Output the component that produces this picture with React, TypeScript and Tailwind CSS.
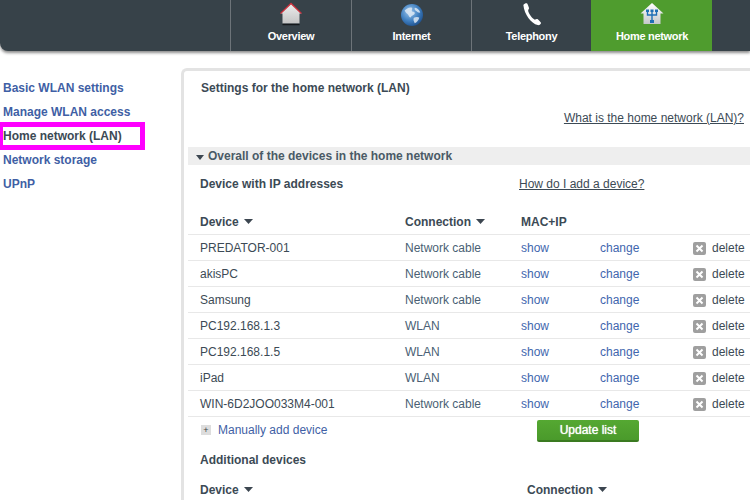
import React from 'react';

const Caret = () => (
  <svg width="9" height="5" viewBox="0 0 9 5" className="ml-[5px] inline-block align-[2px]">
    <path d="M0 0h9L4.5 5z" fill="#3c4650" />
  </svg>
);

const OverviewIcon = () => (
  <svg width="24" height="24" viewBox="0 0 24 24">
    <defs>
      <linearGradient id="ov" x1="0" y1="0" x2="0" y2="1">
        <stop offset="0" stopColor="#eeeeee" />
        <stop offset="1" stopColor="#c4c4c4" />
      </linearGradient>
    </defs>
    <path d="M12 1.500 L22.500 11.500 L20.500 11.500 L20.500 21.500 L3.500 21.500 L3.500 11.500 L1.500 11.500 Z" fill="url(#ov)" />
    <path d="M1.500 11.500 L12 1.500 L22.500 11.500" fill="none" stroke="#c9303c" strokeWidth="1.300" />
    <path d="M3.500 22.500h17" stroke="#15191c" strokeWidth="1.500" />
  </svg>
);

const GlobeIcon = () => (
  <svg width="22" height="22" viewBox="0 0 24 24">
    <defs>
      <radialGradient id="gl" cx="0.4" cy="0.35" r="0.7">
        <stop offset="0" stopColor="#9cc6ec" />
        <stop offset="0.6" stopColor="#3f7fc0" />
        <stop offset="1" stopColor="#1d4f8c" />
      </radialGradient>
    </defs>
    <circle cx="12" cy="12" r="12" fill="url(#gl)" />
    <path d="M4 7c2-2 5-4 8-3 1 1-1 3 0 4s3 0 3 2-3 2-4 4-2 0-3-2-3-2-4-5z" fill="#dfeaf4" opacity="0.85" />
    <path d="M15 4c2 0 5 2 6 5-1 1-3 0-4-1s-3-2-2-4zM14 15c2-1 5-1 6 0-1 3-3 5-5 6-1-2-2-4-1-6z" fill="#e6eff7" opacity="0.8" />
  </svg>
);

const PhoneIcon = () => (
  <svg width="20" height="24" viewBox="0 0 20 25">
    <path d="M1 3 C2 1.500 4 1 5 1.500 C6 3 6.500 5 7 6.500 C6.500 7.500 6 8 6 9.500 C7 13 10 17 13 18.500 C14 18 15 17.500 16 18 C17.500 19.500 19 21 19.500 22 C19 23.500 17.500 24.500 16 24 C9 22 2 13 1 3 Z" fill="#fff" />
  </svg>
);

const NetworkIcon = () => (
  <svg width="24" height="24" viewBox="0 0 24 24">
    <defs>
      <linearGradient id="hn" x1="0" y1="0" x2="0" y2="1">
        <stop offset="0" stopColor="#ffffff" />
        <stop offset="1" stopColor="#c4c8ca" />
      </linearGradient>
    </defs>
    <path d="M12 1 L23.500 11.500 L20.500 11.500 L20.500 22 L3.500 22 L3.500 11.500 L0.500 11.500 Z" fill="url(#hn)" />
    <path d="M12 9v10M7.500 9.500v3.500h9V9.500" fill="none" stroke="#1f6fb5" strokeWidth="1.400" />
    <path d="M6 7.500h3v2.500H6zM10.500 7.500h3v2.500h-3zM15 7.500h3v2.500h-3zM10 18h4v3h-4z" fill="#1f6fb5" />
  </svg>
);

const tabs = [
  { label: 'Overview', icon: <OverviewIcon />, width: 'w-[121px]' },
  { label: 'Internet', icon: <GlobeIcon />, width: 'w-[120px]' },
  { label: 'Telephony', icon: <PhoneIcon />, width: 'w-[120px]' },
  { label: 'Home network', icon: <NetworkIcon />, width: 'w-[121px]', active: true },
];

const sideLinks = ['Basic WLAN settings', 'Manage WLAN access', 'Home network (LAN)', 'Network storage', 'UPnP'];

const devices = [
  ['PREDATOR-001', 'Network cable'],
  ['akisPC', 'Network cable'],
  ['Samsung', 'Network cable'],
  ['PC192.168.1.3', 'WLAN'],
  ['PC192.168.1.5', 'WLAN'],
  ['iPad', 'WLAN'],
  ['WIN-6D2JOO033M4-001', 'Network cable'],
];

export default function App() {
  return (
    <div className="w-[750px] h-[500px] overflow-hidden bg-white text-[12px] text-[#3c4a55] font-['Liberation_Sans',Arial,sans-serif]">
      <header className="h-[51px] bg-[#374249] rounded-bl-[8px] shadow-[0_2px_3px_rgba(0,0,0,0.45)] pl-[230px] flex">
        {tabs.map((t) => (
          <div
            key={t.label}
            className={`${t.width} h-full flex flex-col items-center border-l ${t.active ? 'bg-[#4f9c2e] border-[#4f9c2e]' : 'border-[#6d7479]'}`}
          >
            <div className="h-[26px] flex items-end justify-center">{t.icon}</div>
            <span className="mt-[2px] text-[11px] font-bold tracking-[-0.3px] text-white">{t.label}</span>
          </div>
        ))}
      </header>

      <div className="flex pt-[17px]">
        <nav className="w-[181px] shrink-0 pt-[8px]">
          {sideLinks.map((l) =>
            l === 'Home network (LAN)' ? (
              <div key={l} className="h-[24px] flex items-center">
                <div className="w-[145px] h-[28px] shrink-0 border-y-[5px] border-r-[5px] border-l-[3px] border-[#ff00ff] flex items-center font-bold text-[#3c4a55]">
                  {l}
                </div>
              </div>
            ) : (
              <div key={l} className="h-[24px] flex items-center pl-[3px] font-bold text-[#3f5fa5]">
                {l}
              </div>
            )
          )}
        </nav>

        <main className="flex-1 border-l-[3px] border-t-[3px] border-[#e3e3e3] rounded-tl-[6px] pl-[4px] h-[440px]">
          <div className="pl-[13px] pt-[10px] h-[26px] font-bold leading-[14px]">Settings for the home network (LAN)</div>
          <div className="mt-[13px] h-[16px] text-right pr-[6px] leading-[16px]">
            <a className="underline">What is the home network (LAN)?</a>
          </div>
          <div className="mt-[21px] h-[18px] bg-[#eeeeee] bg-[radial-gradient(#dcdcdc_0.6px,transparent_0.6px)] bg-[length:4px_4px] flex items-center pl-[8px]">
            <svg width="8" height="5" viewBox="0 0 8 5" className="mt-[2px]">
              <path d="M0 0h8L4 5z" fill="#3c4650" />
            </svg>
            <span className="ml-[4px] font-bold text-[#4a5a66] leading-[14px]">Overall of the devices in the home network</span>
          </div>

          <div className="flex h-[38px] items-center">
            <span className="pl-[12px] w-[331px] font-bold">Device with IP addresses</span>
            <a className="underline">How do I add a device?</a>
          </div>

          <div className="mt-[6px] h-[26px] pl-[12px] flex items-center border-b border-[#e8e8e8] font-bold">
            <span className="w-[205px]">Device<Caret /></span>
            <span className="w-[116px]">Connection<Caret /></span>
            <span>MAC+IP</span>
          </div>
          {devices.map(([name, conn]) => (
            <div key={name} className="h-[26px] pl-[12px] flex items-center border-b border-[#e8e8e8]">
              <span className="w-[205px]">{name}</span>
              <span className="w-[116px] text-[#4a5f74]">{conn}</span>
              <span className="w-[79px] text-[#3f66ae]">show</span>
              <span className="w-[93px] text-[#3f66ae]">change</span>
              <span className="w-[13px] h-[13px] rounded-[2px] bg-[#9f9f9f] flex items-center justify-center mt-[1px]">
                <svg width="9" height="9" viewBox="0 0 9 9">
                  <path d="M1.500 1.500l6 6M7.500 1.500l-6 6" stroke="#fff" strokeWidth="2" />
                </svg>
              </span>
              <span className="ml-[6px]">delete</span>
            </div>
          ))}

          <div className="h-[26px] pl-[13px] flex items-center">
            <span className="w-[10px] h-[10px] bg-[#dddddd] flex items-center justify-center text-[9px] leading-none text-[#444]">+</span>
            <span className="ml-[7px] w-[319px] text-[#3f5fa5]">Manually add device</span>
            <button className="w-[102px] h-[22px] mt-[1px] rounded-[2px] bg-gradient-to-b from-[#55a832] to-[#4a9a2b] border-b-2 border-[#3a7a20] text-white [text-shadow:0_0_1px_#ffffff]">Update list</button>
          </div>

          <div className="mt-[4px] h-[26px] pl-[12px] flex items-center font-bold">Additional devices</div>
          <div className="mt-[4px] h-[26px] pl-[12px] flex items-center font-bold">
            <span className="w-[327px]">Device<Caret /></span>
            <span>Connection<Caret /></span>
          </div>
        </main>
      </div>
    </div>
  );
}
